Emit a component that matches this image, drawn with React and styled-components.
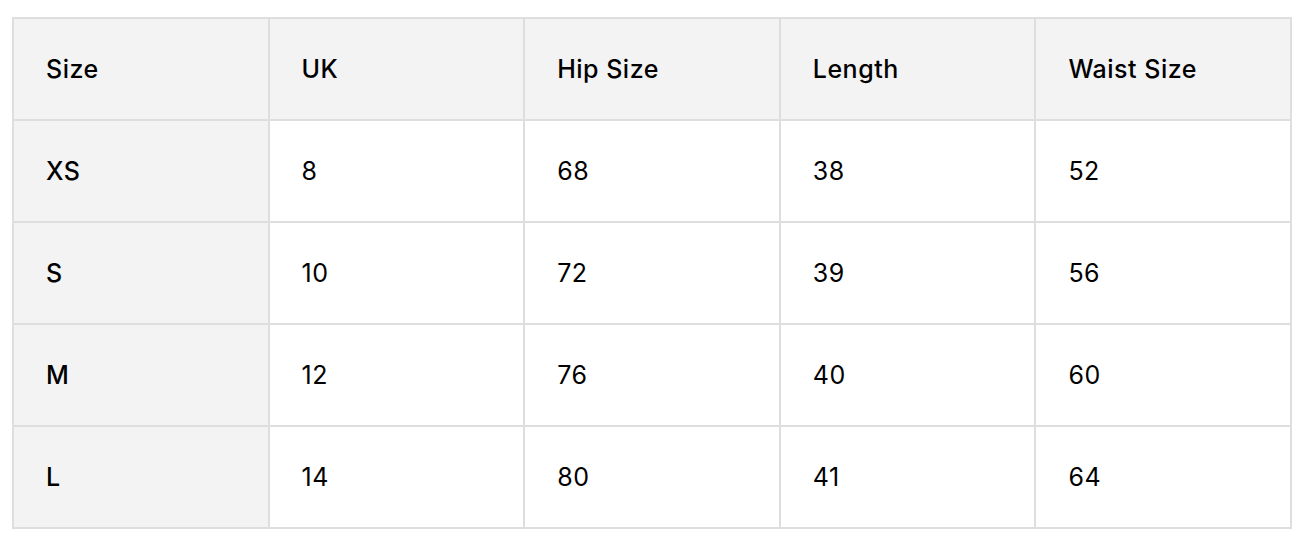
import React from "react";
import styled, { createGlobalStyle } from "styled-components";

const GlobalStyle = createGlobalStyle`
  body {
    margin: 0;
    background: #ffffff;
    font-family: Inter, "Noto Sans", sans-serif;
    color: #000000;
  }
`;

const Page = styled.div`
  padding: 17px 18px 20px 12px;
`;

const Table = styled.table`
  width: 1280px;
  border-collapse: collapse;
  border: 2px solid #dedede;
  table-layout: fixed;
`;

const Cell = styled.td`
  height: 102px;
  padding: 0 32px;
  border: 2px solid #dedede;
  font-size: 25px;
  font-weight: ${(p) => (p.$head ? 500 : 400)};
  background: ${(p) => (p.$head ? "#f3f3f3" : "#ffffff")};
  text-align: left;
  vertical-align: middle;
  letter-spacing: 0.5px;
  box-sizing: border-box;
`;

const columns = ["Size", "UK", "Hip Size", "Length", "Waist Size"];

const rows = [
  ["XS", "8", "68", "38", "52"],
  ["S", "10", "72", "39", "56"],
  ["M", "12", "76", "40", "60"],
  ["L", "14", "80", "41", "64"],
];

export default function App() {
  return (
    <>
      <GlobalStyle />
      <Page>
        <Table>
          <thead>
            <tr>
              {columns.map((c) => (
                <Cell as="th" key={c} $head>
                  {c}
                </Cell>
              ))}
            </tr>
          </thead>
          <tbody>
            {rows.map((r) => (
              <tr key={r[0]}>
                {r.map((v, i) => (
                  <Cell key={i} $head={i === 0}>
                    {v}
                  </Cell>
                ))}
              </tr>
            ))}
          </tbody>
        </Table>
      </Page>
    </>
  );
}
